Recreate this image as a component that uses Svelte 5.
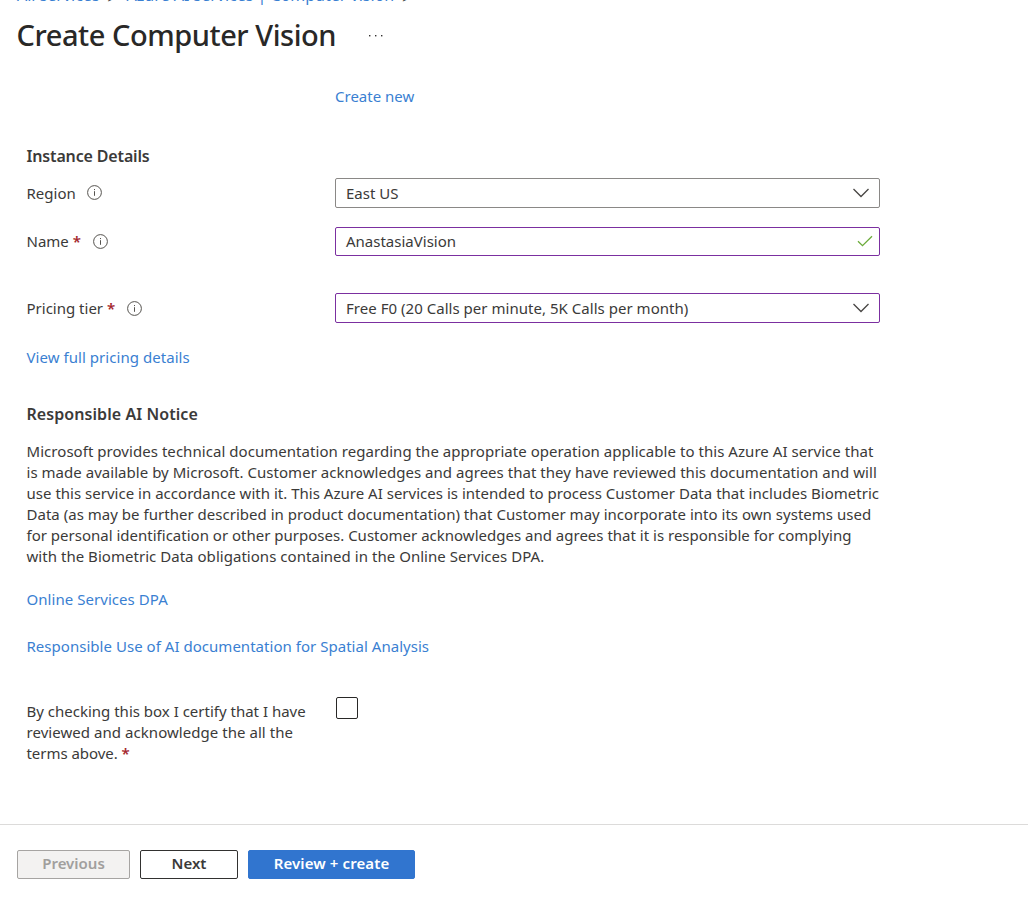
<script>
  const notice = [
    { text: 'Microsoft provides technical documentation regarding the appropriate operation applicable to this Azure AI service that', gap: 0.046 },
    { text: 'is made available by Microsoft. Customer acknowledges and agrees that they have reviewed this documentation and will', gap: 0.034 },
    { text: 'use this service in accordance with it. This Azure AI services is intended to process Customer Data that includes Biometric', gap: 0.015 },
    { text: 'Data (as may be further described in product documentation) that Customer may incorporate into its own systems used', gap: 0.021 },
    { text: 'for personal identification or other purposes. Customer acknowledges and agrees that it is responsible for complying', gap: 0.004 },
    { text: 'with the Biometric Data obligations contained in the Online Services DPA.', gap: 0.036 }
  ];
  const terms = [
    { text: 'By checking this box I certify that I have', gap: 0 },
    { text: 'reviewed and acknowledge the all the', gap: 0.05 },
    { text: 'terms above.', gap: -0.05 }
  ];
  let accepted = $state(false);
</script>

{#snippet info()}
  <svg class="info" viewBox="0 0 15 15" width="15" height="15" fill="none" stroke="#55534f">
    <circle cx="7.5" cy="7.5" r="6.9" />
    <path d="M7.5 6.2v4.6M7.5 4v1.1" />
  </svg>
{/snippet}

{#snippet chevron()}
  <svg class="chevron" viewBox="0 0 16 10" width="16" height="10" fill="none" stroke="#484644" stroke-width="1.3">
    <path d="M.5 1 8 8.5 15.5 1" />
  </svg>
{/snippet}

<main class="page">
  <nav class="crumbs">
    <a href="#all">All services</a><span class="sep">&gt;</span><a href="#azure">Azure AI services | Computer vision</a><span class="sep">&gt;</span>
  </nav>
  <header class="title">
    <h1>Create Computer Vision</h1>
    <svg viewBox="0 0 16 4" width="16" height="4" fill="#323130">
      <rect x="1" y="1" width="1.4" height="1.4" /><rect x="7" y="1" width="1.4" height="1.4" /><rect x="13" y="1" width="1.4" height="1.4" />
    </svg>
  </header>

  <section class="form">
    <a class="create" href="#new">Create new</a>

    <h2 class="instance">Instance Details</h2>
    <div class="row region">
      <span class="label">Region{@render info()}</span>
      <div class="field"><span>East US</span>{@render chevron()}</div>
    </div>
    <div class="row name">
      <span class="label">Name<b>*</b>{@render info()}</span>
      <div class="field changed">
        <span>AnastasiaVision</span>
        <svg class="check" viewBox="0 0 16 12" width="16" height="12" fill="none" stroke="#6bab3a" stroke-width="1.3"><path d="M1 6.2 5.5 10.6 15 1.2" /></svg>
      </div>
    </div>
    <div class="row tier">
      <span class="label">Pricing tier<b>*</b>{@render info()}</span>
      <div class="field changed"><span class="plan">Free F0 (20 Calls per minute, 5K Calls per month)</span>{@render chevron()}</div>
    </div>
    <a class="pricing" href="#pricing">View full pricing details</a>

    <h2 class="responsible">Responsible AI Notice</h2>
    <p class="notice">
      {#each notice as line}<span style:letter-spacing="{line.gap}px">{line.text}</span>{/each}
    </p>
    <a class="dpa" href="#dpa">Online Services DPA</a>
    <a class="usage" href="#usage">Responsible Use of AI documentation for Spatial Analysis</a>

    <div class="row consent">
      <label for="accept">{#each terms as line, i}<span style:letter-spacing="{line.gap}px">{line.text}{#if i === terms.length - 1}<b>*</b>{/if}</span>{/each}</label>
      <input id="accept" type="checkbox" bind:checked={accepted} />
    </div>
  </section>

  <footer>
    <button class="previous" disabled>Previous</button>
    <button class="next">Next</button>
    <button class="primary">Review + create</button>
  </footer>
</main>

<style>
  .page {
    display: flex;
    flex-direction: column;
    box-sizing: border-box;
    height: 897px;
    overflow: hidden;
    background: #fff;
    color: #3b3a39;
    font: 400 15px/21px 'Noto Sans', 'Segoe UI', sans-serif;
    white-space: nowrap;
  }
  a { color: #3a7fd2; text-decoration: none; }
  b { color: #a4262c; font-weight: 600; margin-left: 4px; }
  .crumbs {
    display: flex;
    flex: none;
    align-items: flex-end;
    height: 5px;
    padding-left: 17px;
    overflow: hidden;
    font-size: 16px;
    line-height: 20px;
  }
  .sep { width: 27px; padding-left: 8px; box-sizing: border-box; font-size: 13px; line-height: 14px; }
  .title { display: flex; align-items: center; height: 61px; padding-left: 16.5px; }
  h1 { margin: -2px 0 0; width: 351px; font-size: 29px; line-height: 40px; font-weight: 500; letter-spacing: -0.45px; color: #292827; }
  .form { display: flex; flex-direction: column; align-items: flex-start; width: 854px; padding: 20px 0 0 26.5px; }
  .create { margin-left: 308.5px; }
  h2 { margin: 0; color: #3b3a39; font-size: 16px; line-height: 21px; font-weight: 600; }
  .instance { margin-top: 39px; letter-spacing: -0.15px; }
  .row { display: grid; grid-template-columns: 308.5px 545px; align-items: start; }
  .label { display: flex; padding-top: 5px; }
  .info { margin: 2px 0 0 11px; }
  b + .info { margin-left: 12px; }
  .field {
    display: flex;
    align-items: center;
    justify-content: space-between;
    box-sizing: border-box;
    height: 30px;
    padding: 0 10px;
    border: 1px solid #8a8886;
    border-radius: 2px;
  }
  .changed { border-color: #7b2fa0; }
  .plan { letter-spacing: 0.03px; }
  .region { margin-top: 11px; }
  .name { margin-top: 19px; }
  .name .label { padding-top: 4px; }
  .name .info { margin-top: 3px; }
  .name .field { height: 29px; padding-right: 6px; }
  .check { margin-bottom: 2px; }
  .tier { margin-top: 37px; }
  .tier .info { margin-top: 3px; }
  .pricing { margin-top: 24px; letter-spacing: 0.05px; }
  .responsible { margin-top: 36px; letter-spacing: 0.07px; }
  .notice { display: flex; flex-direction: column; margin: 16px 0 0; }
  .dpa { margin-top: 22px; letter-spacing: 0.05px; }
  .usage { margin-top: 26px; letter-spacing: 0.03px; }
  .consent { margin-top: 40px; }
  .consent label { display: flex; flex-direction: column; padding-top: 4px; }
  input {
    appearance: none;
    box-sizing: border-box;
    width: 22px;
    height: 22px;
    margin: 0 0 0 1px;
    border: 1px solid #292827;
    border-radius: 2px;
  }
  footer {
    display: flex;
    gap: 10px;
    box-sizing: border-box;
    height: 73px;
    margin-top: auto;
    padding: 25px 17px 0;
    border-top: 1px solid #dcdbda;
  }
  button {
    height: 29px;
    padding: 0 0 2px;
    border: 1px solid #323130;
    border-radius: 2px;
    background: #fff;
    color: #3b3a39;
    font: 600 15px/21px 'Noto Sans', 'Segoe UI', sans-serif;
  }
  .previous { width: 113px; border-color: #a6a4a2; background: #f3f2f1; color: #a19f9d; }
  .next { width: 98px; }
  .primary { width: 167px; border-color: #3175cf; background: #3175cf; color: #fff; letter-spacing: 0.1px; }
</style>
